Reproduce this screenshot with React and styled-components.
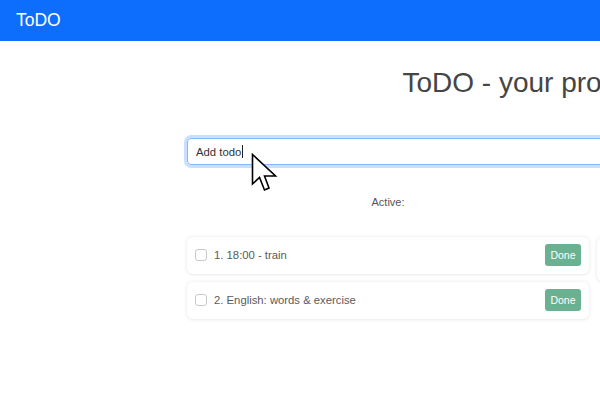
import React from "react";
import styled, { createGlobalStyle } from "styled-components";

const Global = createGlobalStyle`
  html, body { margin: 0; padding: 0; background: #fff; overflow: hidden; }
  body { font-family: "Liberation Sans", Arial, sans-serif; width: 600px; height: 400px; }
`;

const Navbar = styled.header`
  height: 41px;
  background: #0d6efd;
  display: flex;
  align-items: center;
  padding-left: 16px;
`;

const Brand = styled.span`
  color: #fff;
  font-size: 17.5px;
  line-height: 20px;
  padding-bottom: 1px;
`;

const Viewport = styled.div`
  position: relative;
  width: 600px;
  height: 359px;
  overflow: hidden;
`;

const Container = styled.main`
  width: 812px;
  margin-left: 187px;
  display: flex;
  flex-direction: column;
`;

const Title = styled.h1`
  margin: 25px 0 0;
  padding-right: 20px;
  font-size: 28px;
  font-weight: 400;
  line-height: 34px;
  color: #454545;
  text-align: center;
  white-space: nowrap;
`;

const InputBox = styled.div`
  margin-top: 38px;
  height: 27px;
  box-sizing: border-box;
  border: 1px solid #86b7fe;
  border-radius: 4px;
  box-shadow: 0 0 0 3px rgba(13, 110, 253, 0.22);
  padding: 0 8px;
  display: flex;
  align-items: center;
  font-size: 11.3px;
  color: #333;
`;

const Caret = styled.span`
  display: inline-block;
  width: 1px;
  height: 13px;
  background: #222;
  margin-left: 1px;
`;

const Columns = styled.div`
  display: grid;
  grid-template-columns: 402px 402px;
  column-gap: 8px;
  margin-top: 31px;
`;

const Column = styled.section`
  display: flex;
  flex-direction: column;
`;

const Label = styled.div`
  text-align: center;
  font-size: 11px;
  line-height: 13px;
  color: #555;
  margin-bottom: 28px;
`;

const List = styled.div`
  display: flex;
  flex-direction: column;
  gap: 8px;
`;

const Card = styled.div`
  height: ${(p) => p.$h || 37}px;
  box-sizing: border-box;
  background: #fff;
  border-radius: 6px;
  box-shadow: 0 0 4px rgba(0, 0, 0, 0.09), 0 1px 2px rgba(0, 0, 0, 0.04);
  display: flex;
  align-items: center;
  padding: 0 8px 2px;
`;

const Check = styled.span`
  width: 12px;
  height: 12px;
  box-sizing: border-box;
  border: 1px solid #c8c8c8;
  border-radius: 3px;
  flex: none;
`;

const ItemText = styled.span`
  margin-left: 7px;
  font-size: 11.3px;
  color: #5a5a5a;
  flex: 1;
`;

const DoneButton = styled.button`
  width: 36px;
  height: 22px;
  border: none;
  border-radius: 3px;
  background: #69b190;
  color: #fff;
  font-family: inherit;
  font-size: 10.5px;
  padding: 0;
`;

const Pointer = styled.svg`
  position: absolute;
  left: 251px;
  top: 112px;
`;

const todos = ["1. 18:00 - train", "2. English: words & exercise"];

export default function App() {
  return (
    <>
      <Global />
      <Navbar>
        <Brand>ToDO</Brand>
      </Navbar>
      <Viewport>
        <Container>
          <Title>ToDO - your progress tracker</Title>
          <InputBox>
            Add todo<Caret />
          </InputBox>
          <Columns>
            <Column>
              <Label>Active:</Label>
              <List>
                {todos.map((t) => (
                  <Card key={t}>
                    <Check />
                    <ItemText>{t}</ItemText>
                    <DoneButton>Done</DoneButton>
                  </Card>
                ))}
              </List>
            </Column>
            <Column>
              <Label>Done:</Label>
              <List>
                <Card $h={45} />
              </List>
            </Column>
          </Columns>
        </Container>
        <Pointer width="30" height="44" viewBox="0 0 30 44">
          <path
            d="M1.5 1.5 L1.5 31 L8.5 24.5 L13.5 37 L18 35 L13.5 23 L24.5 23 Z"
            fill="#fff"
            stroke="#000"
            strokeWidth="1.6"
            strokeLinejoin="miter"
          />
        </Pointer>
      </Viewport>
    </>
  );
}
